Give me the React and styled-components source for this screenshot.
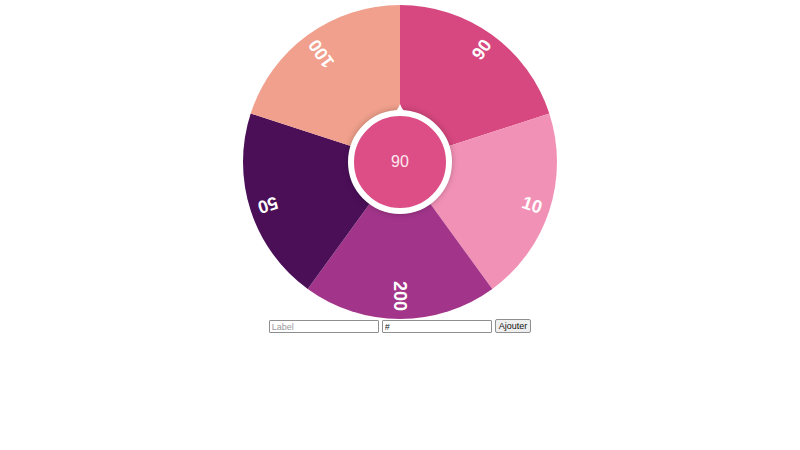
import React, { useState } from 'react';
import styled, { createGlobalStyle } from 'styled-components';

const GlobalStyle = createGlobalStyle`
  html, body {
    margin: 0;
    padding: 0;
    background: #fff;
    font-family: "Liberation Sans", Arial, sans-serif;
  }
`;

const SIZE = 314;
const R = 157;
const C = SIZE / 2;

const slices = [
  { label: '90', color: '#d6487f' },
  { label: '10', color: '#f291b6' },
  { label: '200', color: '#a2358a' },
  { label: '50', color: '#4b0f58' },
  { label: '100', color: '#f0a08c' },
];

const point = (deg, r) => {
  const a = (deg * Math.PI) / 180;
  return [C + r * Math.sin(a), C - r * Math.cos(a)];
};

const slicePath = (from, to) => {
  const [x1, y1] = point(from, R);
  const [x2, y2] = point(to, R);
  const big = to - from > 180 ? 1 : 0;
  return `M${C},${C} L${x1},${y1} A${R},${R} 0 ${big} 1 ${x2},${y2} Z`;
};

function Wheel({ items, current }) {
  const step = 360 / items.length;
  return (
    <WheelBox>
      <svg width={SIZE} height={SIZE} viewBox={`0 0 ${SIZE} ${SIZE}`}>
        {items.map((it, i) => {
          const from = i * step;
          const mid = from + step / 2;
          return (
            <g key={i}>
              <path d={slicePath(from, from + step)} fill={it.color} />
              <SliceLabel
                x={C + 149}
                y={C}
                textAnchor="end"
                dominantBaseline="central"
                transform={`rotate(${mid - 90} ${C} ${C})`}
              >
                {it.label}
              </SliceLabel>
            </g>
          );
        })}
      </svg>
      <Hub>
        <Pointer width="18" height="10" viewBox="0 0 18 10">
          <path d="M0 10 Q6 8 9 0 Q12 8 18 10 Z" fill="#fff" />
        </Pointer>
        {current}
      </Hub>
    </WheelBox>
  );
}

export default function App() {
  const [items, setItems] = useState(slices);
  const [label, setLabel] = useState('');
  const [color, setColor] = useState('#');

  const add = () => {
    if (!label) return;
    setItems([...items, { label, color: color.length > 1 ? color : '#999' }]);
    setLabel('');
    setColor('#');
  };

  return (
    <>
      <GlobalStyle />
      <Page>
        <Wheel items={items} current="90" />
        <Form onSubmit={(e) => { e.preventDefault(); add(); }}>
          <Field
            type="text"
            placeholder="Label"
            value={label}
            onChange={(e) => setLabel(e.target.value)}
          />
          <Field
            type="text"
            value={color}
            onChange={(e) => setColor(e.target.value)}
          />
          <AddButton type="submit">Ajouter</AddButton>
        </Form>
      </Page>
    </>
  );
}

const Page = styled.main`
  display: flex;
  flex-direction: column;
  align-items: center;
  padding-top: 5px;
`;

const WheelBox = styled.div`
  position: relative;
  width: ${SIZE}px;
  height: ${SIZE}px;

  svg {
    display: block;
  }
`;

const SliceLabel = styled.text`
  fill: #fff;
  font-family: "Liberation Sans", Arial, sans-serif;
  font-weight: 700;
  font-size: 18px;
`;

const Hub = styled.div`
  position: absolute;
  left: 50%;
  top: 50%;
  width: 92px;
  height: 92px;
  margin: -52px 0 0 -52px;
  border: 6px solid #fff;
  border-radius: 50%;
  background: #dc4e85;
  box-shadow: 0 0 6px rgba(0, 0, 0, 0.25);
  display: flex;
  align-items: center;
  justify-content: center;
  color: #fde8f0;
  font-size: 16px;
`;

const Pointer = styled.svg`
  position: absolute;
  top: -12px;
  left: 50%;
  margin-left: -9px;
`;

const Form = styled.form`
  display: flex;
  gap: 3px;
  margin-top: 1px;
`;

const Field = styled.input`
  box-sizing: border-box;
  width: 110px;
  height: 13px;
  padding: 0 2px;
  border: 1px solid #8f8f8f;
  border-radius: 1px;
  font-family: "Liberation Sans", Arial, sans-serif;
  font-size: 9px;
  color: #222;

  &::placeholder {
    color: #9a9a9a;
  }
`;

const AddButton = styled.button`
  box-sizing: border-box;
  height: 14px;
  margin-top: -1px;
  padding: 0 3px;
  border: 1px solid #8f8f8f;
  border-radius: 2px;
  background: #efefef;
  font-family: "Liberation Sans", Arial, sans-serif;
  font-size: 9px;
  line-height: 1;
  color: #111;
`;
